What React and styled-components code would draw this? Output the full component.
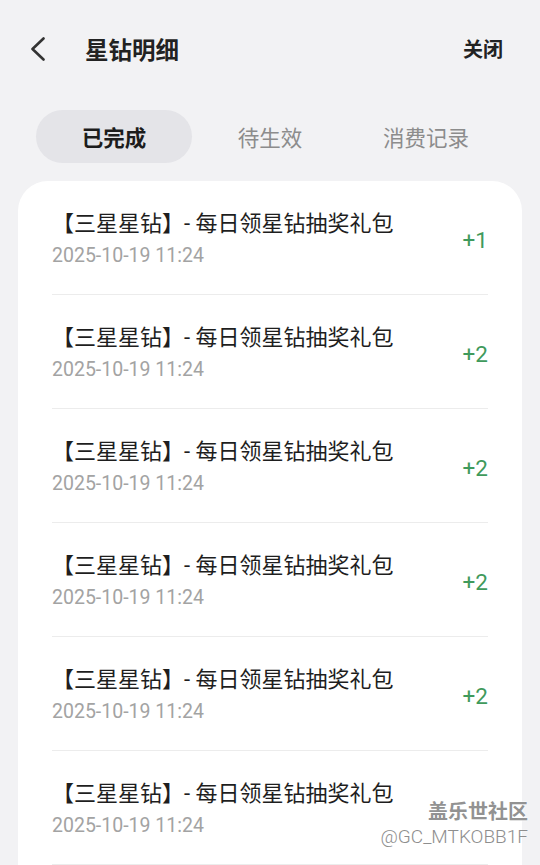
import * as React from "react"
import styled, { createGlobalStyle } from "styled-components"

const GlobalStyle = createGlobalStyle`
  html, body {
    margin: 0;
    padding: 0;
    background: #f2f2f4;
  }
  body {
    font-family: "Roboto", "Noto Sans CJK SC", sans-serif;
    -webkit-font-smoothing: antialiased;
  }
`;

const Page = styled.div`
  width: 540px;
  height: 865px;
  overflow: hidden;
  background: #f2f2f4;
  position: relative;
  display: flex;
  flex-direction: column;
`;

const Header = styled.header`
  height: 98px;
  display: flex;
  align-items: center;
  padding: 0 37px 0 28px;
  box-sizing: border-box;
`;

const BackButton = styled.button`
  width: 20px;
  height: 26px;
  padding: 0;
  border: 0;
  background: none;
  display: grid;
  place-items: center;
  margin-right: 37px;
`;

const Title = styled.h1`
  flex: 1;
  margin: 0;
  font-size: 23.5px;
  font-weight: 700;
  color: #222;
  font-family: "Noto Sans CJK SC", sans-serif;
`;

const CloseLink = styled.span`
  font-size: 20px;
  font-weight: 700;
  color: #222;
  font-family: "Noto Sans CJK SC", sans-serif;
`;

const Tabs = styled.nav`
  display: grid;
  grid-template-columns: repeat(3, 156px);
  margin: 13px 0 0 36px;
  height: 53px;
`;

const Tab = styled.div`
  display: grid;
  place-items: center;
  border-radius: 27px;
  font-family: "Noto Sans CJK SC", sans-serif;
  font-size: 21.5px;
  font-weight: ${p => (p.$active ? 700 : 400)};
  color: ${p => (p.$active ? "#1c1c1c" : "#8c8c8c")};
  background: ${p => (p.$active ? "#e4e4e8" : "transparent")};
`;

const Card = styled.section`
  margin: 18px 18px 0;
  flex: 1;
  background: #fff;
  border-radius: 30px 30px 0 0;
  padding: 0 34px;
`;

const Row = styled.div`
  display: flex;
  align-items: center;
  padding: 28px 0 25px;
  border-bottom: 1px solid #ececec;
`;

const RowText = styled.div`
  flex: 1;
  display: flex;
  flex-direction: column;
`;

const RowTitle = styled.div`
  font-size: 22px;
  line-height: 30px;
  color: #1e1e1e;
  white-space: nowrap;
`;

const RowDate = styled.div`
  margin-top: 4px;
  font-size: 19.5px;
  line-height: 26px;
  color: #a3a3a3;
`;

const Amount = styled.div`
  font-size: 22.5px;
  color: #3f9a5c;
  padding-top: 2px;
`;

const Watermark = styled.div`
  position: absolute;
  right: 12px;
  bottom: 16px;
  display: flex;
  flex-direction: column;
  align-items: flex-end;
  pointer-events: none;
`;

const WatermarkBrand = styled.div`
  font-family: "Noto Sans CJK SC", sans-serif;
  font-size: 20px;
  font-weight: 700;
  color: #929292;
  text-shadow: 0 0 2px #fff, 0 0 2px #fff;
  line-height: 28px;
`;

const WatermarkUser = styled.div`
  font-size: 19px;
  font-weight: 300;
  color: #8e8e8e;
  line-height: 24px;
  text-shadow: 0 0 2px #fff;
`;

const records = [
  { amount: "+1" },
  { amount: "+2" },
  { amount: "+2" },
  { amount: "+2" },
  { amount: "+2" },
  { amount: "" },
];

const App = () => {
  return (
    <>
      <GlobalStyle />
      <Page>
        <Header>
          <BackButton aria-label="back">
            <svg width="16" height="24" viewBox="0 0 16 24">
              <path d="M13.5 1.5 L2.5 12 L13.5 22.5" fill="none" stroke="#333" strokeWidth="2.6" strokeLinecap="round" strokeLinejoin="round" />
            </svg>
          </BackButton>
          <Title>星钻明细</Title>
          <CloseLink>关闭</CloseLink>
        </Header>
        <Tabs>
          <Tab $active>已完成</Tab>
          <Tab>待生效</Tab>
          <Tab>消费记录</Tab>
        </Tabs>
        <Card>
          {records.map((r, i) => (
            <Row key={i}>
              <RowText>
                <RowTitle>【三星星钻】- 每日领星钻抽奖礼包</RowTitle>
                <RowDate>2025-10-19 11:24</RowDate>
              </RowText>
              <Amount>{r.amount}</Amount>
            </Row>
          ))}
        </Card>
        <Watermark>
          <WatermarkBrand>盖乐世社区</WatermarkBrand>
          <WatermarkUser>@GC_MTKOBB1F</WatermarkUser>
        </Watermark>
      </Page>
    </>
  )
}

export default App
